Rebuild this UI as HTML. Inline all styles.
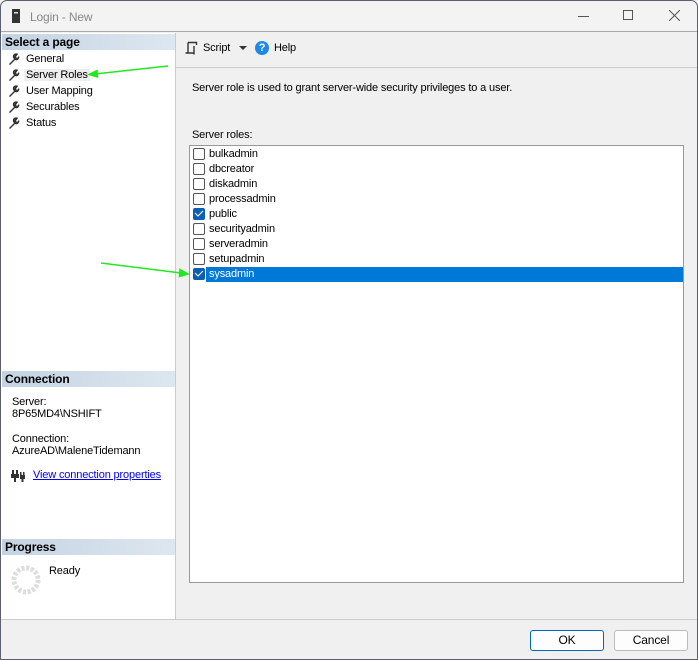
<!DOCTYPE html>
<html><head><style>
*{box-sizing:border-box;margin:0;padding:0}
body{width:698px;height:660px;overflow:hidden;background:#f0f0f0;font-family:"Liberation Sans",sans-serif;font-size:11px;color:#000;letter-spacing:-0.15px;position:relative}
.frame{position:absolute;left:0;top:0;width:698px;height:660px;border:1px solid #5a6070;border-radius:7px 7px 0 0;z-index:5;pointer-events:none}
.win{position:absolute;left:0;top:2px;width:698px;height:658px;background:#f0f0f0}
.title{position:absolute;left:1px;top:-2px;width:696px;height:32px;background:#f3f3f3;border-bottom:1px solid #aaa}
.title span{position:absolute;left:29px;top:10px;font-size:12px;color:#888}
.left{position:absolute;left:1px;top:31px;width:175px;height:587px;background:#fff;border-right:1px solid #ccc}
.hdr{position:absolute;left:1px;width:173px;height:16px;background:linear-gradient(90deg,#c4d3e2,#dde7f0);font-weight:bold;font-size:12px;padding:1px 3px}
.item{position:absolute;left:25px;font-size:11px}
.cb{position:absolute;left:193px;width:12px;height:12px;border:1px solid #555;border-radius:2px;background:#fff}
.cb.on{background:#0a5fb4;border-color:#0a5fb4}
.lbl{position:absolute;left:209px;font-size:11px}
.btn{position:absolute;top:628px;height:21px;border:1px solid #bbb;border-radius:3px;background:#fdfdfd;text-align:center;font-size:12px;line-height:19px}
</style></head><body>
<div class="frame"></div>
<div class="win">
<div class="title">
<svg style="position:absolute;left:11px;top:9px" width="8" height="14"><rect width="8" height="14" fill="#333"/><rect x="2" y="3" width="4" height="1.5" fill="#ddd"/></svg>
<span>Login - New</span>
<div style="position:absolute;left:577px;top:16px;width:11px;height:1px;background:#555"></div>
<div style="position:absolute;left:622px;top:10px;width:10px;height:10px;border:1px solid #555"></div>
<svg style="position:absolute;left:668px;top:10px" width="11" height="11"><path d="M0 0L11 11M11 0L0 11" stroke="#555"/></svg>
</div>
<div class="left">
<div class="hdr" style="top:1px">Select a page</div>
<div class="item" style="top:20px">General</div>
<div class="item" style="top:36px;background:#eee;padding:0 2px;left:23px">Server Roles</div>
<div class="item" style="top:52px">User Mapping</div>
<div class="item" style="top:68px">Securables</div>
<div class="item" style="top:84px">Status</div>
<svg style="position:absolute;left:7px;top:20px" width="12" height="80" fill="#333">
<g id="w"><path d="M1 11L6 6A3 3 0 0 1 10 1L8 4 9 5 11 3A3 3 0 0 1 7 7L2 12Z"/></g>
<use href="#w" y="16"/><use href="#w" y="32"/><use href="#w" y="48"/><use href="#w" y="64"/></svg>
<div class="hdr" style="top:338px">Connection</div>
<div style="position:absolute;left:11px;top:363px;line-height:12px">Server:<br>8P65MD4\NSHIFT</div>
<div style="position:absolute;left:11px;top:400px;line-height:12px">Connection:<br>AzureAD\MaleneTidemann</div>
<svg style="position:absolute;left:10px;top:437px" width="14" height="12" fill="#333"><rect x="1" y="0" width="2" height="4"/><rect x="5" y="0" width="2" height="4"/><rect x="0" y="4" width="8" height="4"/><rect x="3" y="8" width="2" height="4"/><rect x="9" y="2" width="1.5" height="3"/><rect x="12" y="2" width="1.5" height="3"/><rect x="9" y="5" width="5" height="4"/><rect x="10.5" y="9" width="2" height="3"/></svg>
<div style="position:absolute;left:32px;top:436px;color:#0000ee;text-decoration:underline">View connection properties</div>
<div class="hdr" style="top:506px">Progress</div>
<svg style="position:absolute;left:9px;top:531px" width="32" height="32"><circle cx="16" cy="16" r="12" fill="none" stroke="#ddd" stroke-width="5" stroke-dasharray="3 1.7"/></svg>
<div style="position:absolute;left:48px;top:532px">Ready</div>
</div>
<svg style="position:absolute;left:184px;top:39px" width="14" height="14" fill="none" stroke="#333" stroke-width="1.4"><path d="M4 1.5H12.5V4M4 1.5V12H1.5M4 12H10V13.5M10 12V5"/></svg>
<div style="position:absolute;left:203px;top:40px">Script</div>
<svg style="position:absolute;left:239px;top:44px" width="8" height="5"><path d="M0 0H8L4 4Z" fill="#333"/></svg>
<div style="position:absolute;left:255px;top:39px;width:14px;height:14px;border-radius:50%;background:#1e88e5;color:#fff;font-weight:bold;font-size:11px;text-align:center;line-height:14px">?</div>
<div style="position:absolute;left:274px;top:40px">Help</div>
<div style="position:absolute;left:176px;top:65px;width:521px;height:1px;background:#ccc"></div>
<div style="position:absolute;left:192px;top:80px">Server role is used to grant server-wide security privileges to a user.</div>
<div style="position:absolute;left:192px;top:127px">Server roles:</div>
<div style="position:absolute;left:189px;top:143px;width:495px;height:438px;background:#fff;border:1px solid #999"></div>
<div style="position:absolute;left:206px;top:265px;width:477px;height:15px;background:#0078d7"></div>
<div class="cb" style="top:146px"></div><div class="lbl" style="top:146px">bulkadmin</div>
<div class="cb" style="top:161px"></div><div class="lbl" style="top:161px">dbcreator</div>
<div class="cb" style="top:176px"></div><div class="lbl" style="top:176px">diskadmin</div>
<div class="cb" style="top:191px"></div><div class="lbl" style="top:191px">processadmin</div>
<div class="cb on" style="top:206px"></div><div class="lbl" style="top:206px">public</div>
<div class="cb" style="top:221px"></div><div class="lbl" style="top:221px">securityadmin</div>
<div class="cb" style="top:236px"></div><div class="lbl" style="top:236px">serveradmin</div>
<div class="cb" style="top:251px"></div><div class="lbl" style="top:251px">setupadmin</div>
<div class="cb on" style="top:266px"></div><div class="lbl" style="top:266px;color:#fff">sysadmin</div>
<svg style="position:absolute;left:0;top:-2px" width="698" height="660"><g stroke="#fff" stroke-width="1" fill="none"><path d="M195 213l3 3 5-5M195 273l3 3 5-5"/></g>
<g stroke="#22e822" stroke-width="1.5" fill="#22e822"><path d="M168 66L95 74"/><path d="M89 74.5L97 70.5 97.5 77Z"/><path d="M101 263L181 273"/><path d="M188 274L180 269.5 179.5 276.5Z"/></g></svg>
<div style="position:absolute;left:1px;top:617px;width:696px;height:1px;background:#ccc"></div>
<div class="btn" style="left:530px;width:74px;border-color:#0067c0">OK</div>
<div class="btn" style="left:614px;width:74px">Cancel</div>
</div>
</body></html>
